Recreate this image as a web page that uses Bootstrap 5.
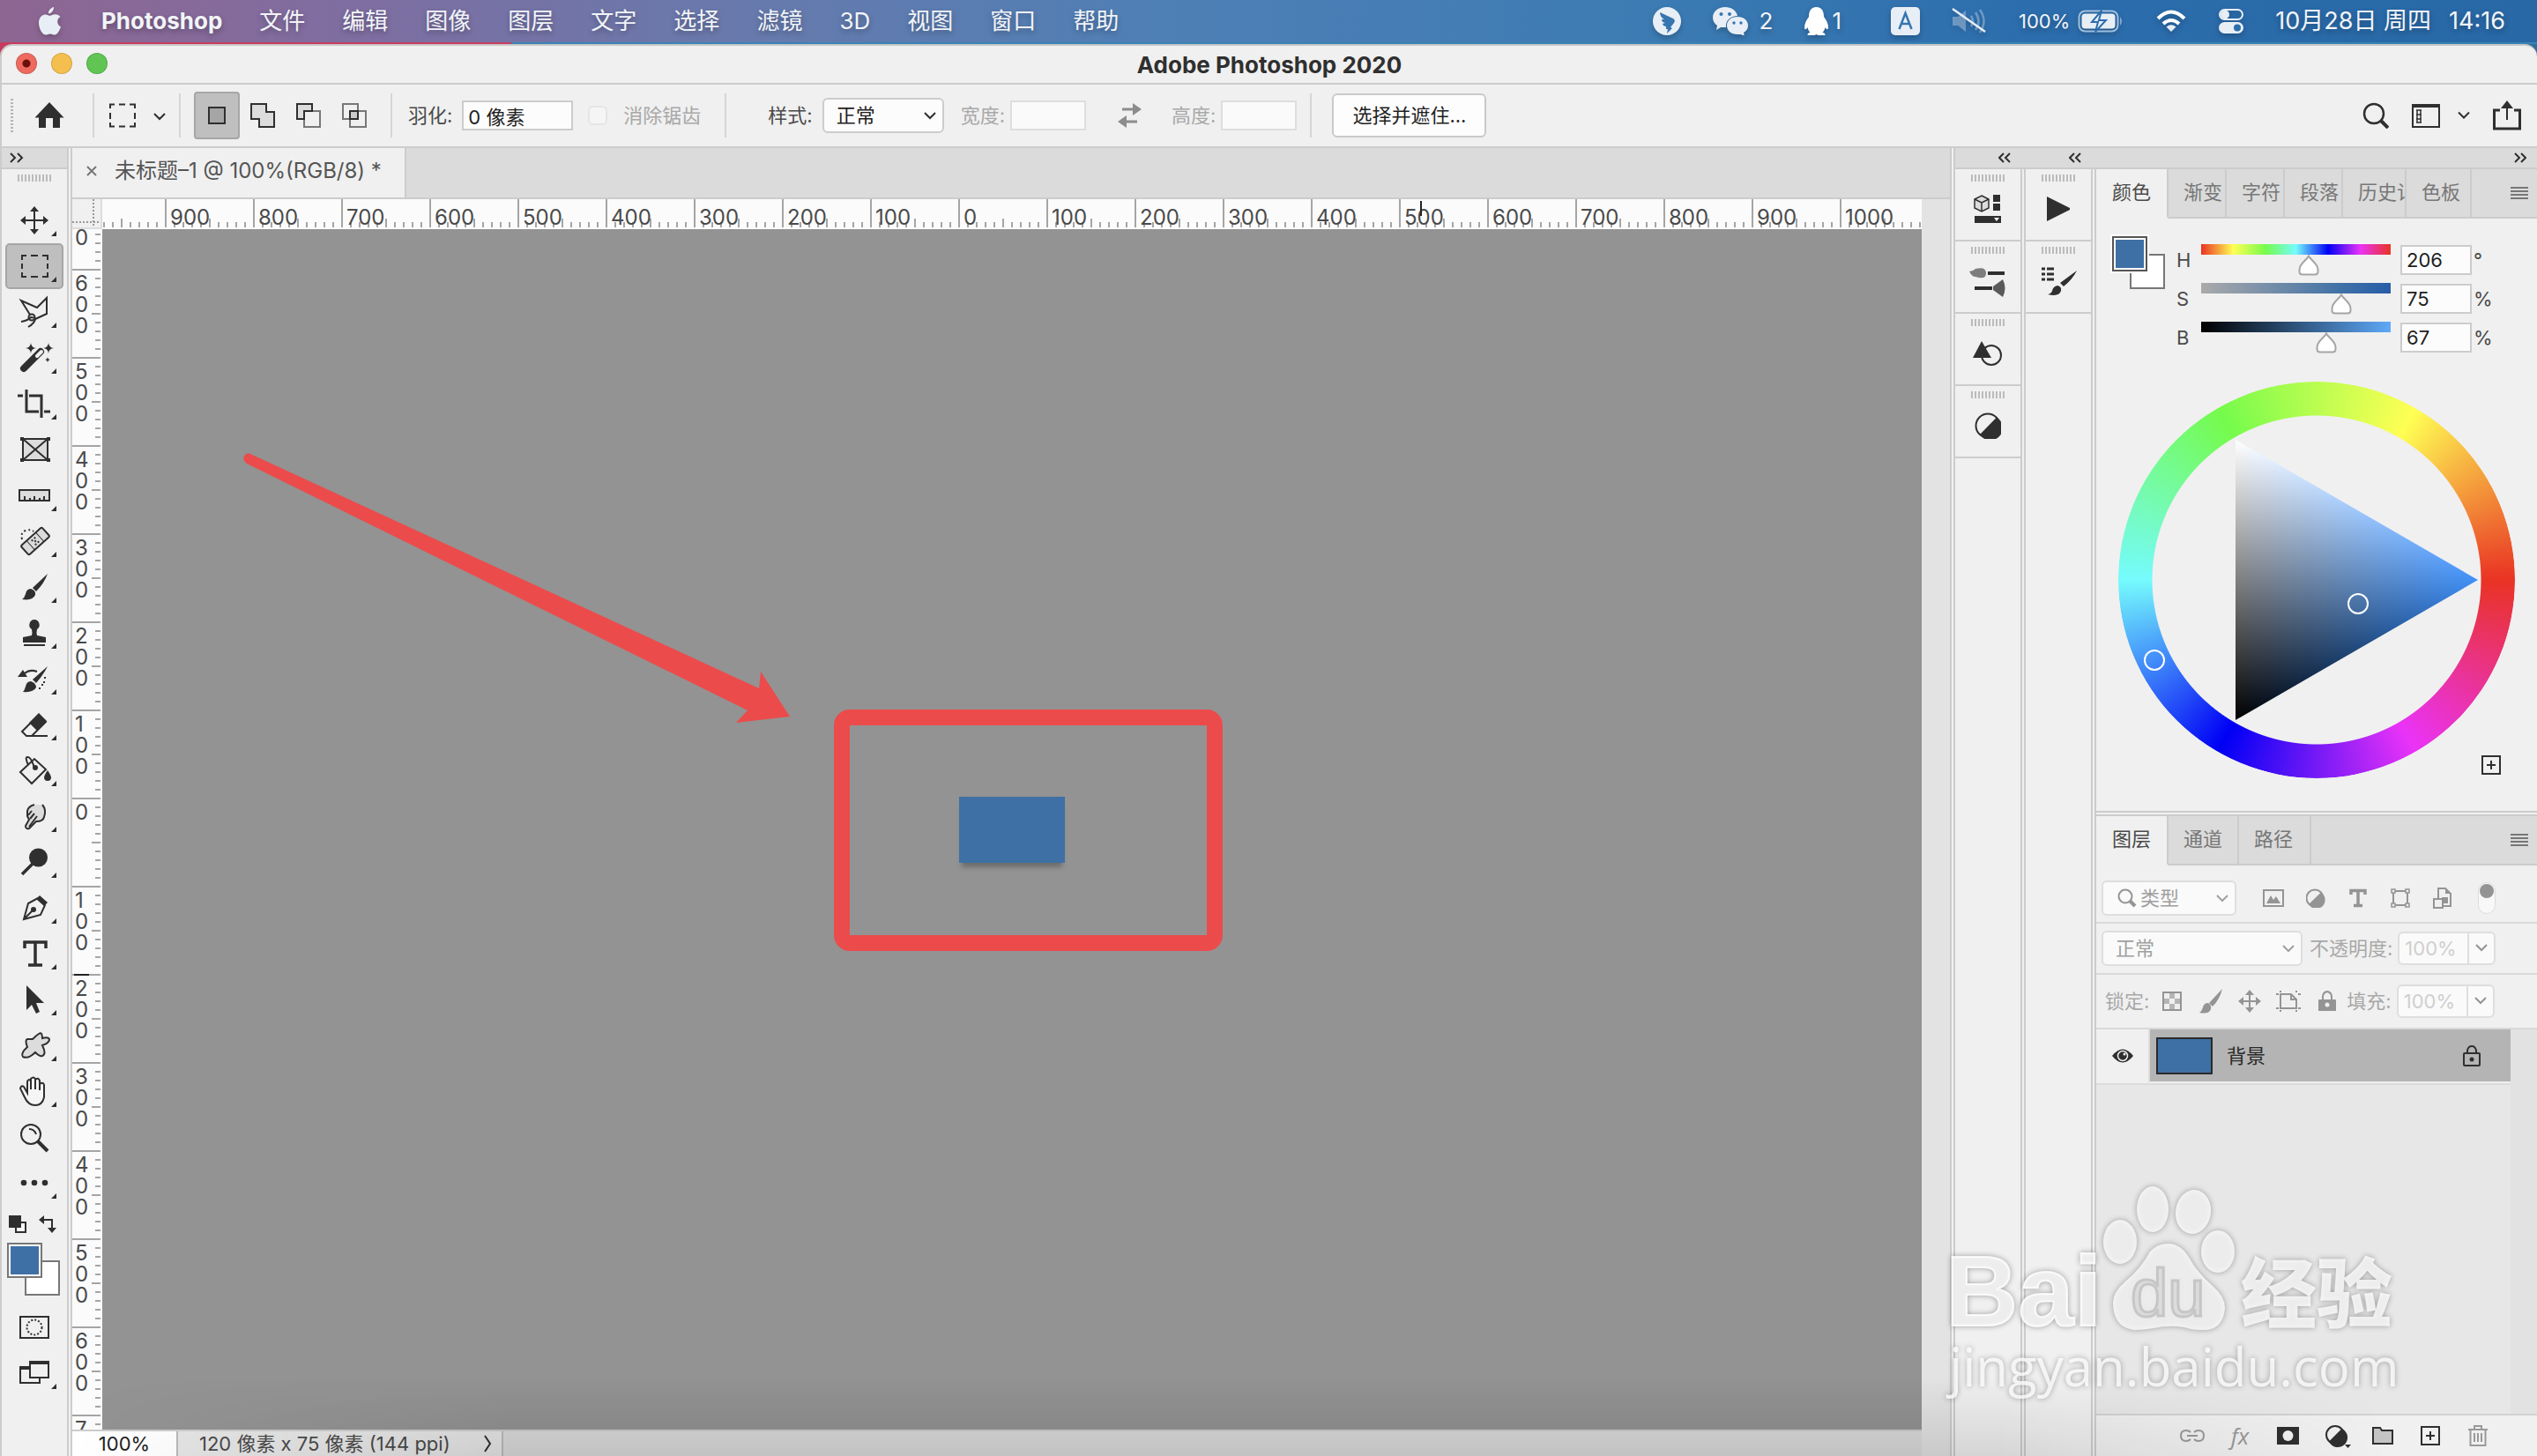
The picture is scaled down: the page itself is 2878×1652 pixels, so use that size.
<!DOCTYPE html>
<html lang="zh-CN">
<head>
<meta charset="utf-8">
<meta name="viewport" content="width=device-width, initial-scale=1">
<title>Adobe Photoshop 2020</title>
<link href="https://cdn.jsdelivr.net/npm/bootstrap@5.3.0/dist/css/bootstrap.min.css" rel="stylesheet">
<style>
  :root { --line:#ccc; --panel:#f0f0f0; --tab:#dbdbdb; --ink:#2f2f2f; --dim:#949494; --blue:#3e70a6; --mark:#ec4b4b; }
  body { font-family: Inter, "Noto Sans CJK SC", sans-serif; font-size: 22px; line-height: 32px; color:#4a4a4a; height:100vh; overflow:hidden;
         background: linear-gradient(90deg,#c73c5e 0 580px,#2f6f9f 580px); }
  svg { display:block; flex:none; fill:none; stroke:var(--ink); stroke-width:2; }
  svg .f { fill:var(--ink); stroke:none; }
  svg .h { fill:#dcdcdc; }
  button { border:0; background:none; padding:0; color:inherit; }
  button, .fixed { flex:none; }

  .menubar { height:50px; padding:0 36px 2px 44px; font-size:26px; color:#f2f4f8; text-shadow:0 3px 6px rgba(0,0,0,.3);
    background: linear-gradient(90deg,#c73c5e 0 580px,#3a83b4 580px) bottom/100% 2px no-repeat,
      linear-gradient(90deg,#8e6692 0,#806da0 13%,#677aad 30%,#4f7fb5 45%,#3d7cb3 64%,#2c6dad 80%,#2868a6 100%); }
  .menubar svg { fill:#e8eef5; stroke:none; filter:drop-shadow(0 3px 3px rgba(0,0,0,.22)); }
  .menus { gap:42px; padding-left:46px; }
  .menus a { color:inherit; text-decoration:none; }
  .tray { gap:36px; }
  .tray .pct { font-size:22px; gap:9px; }
  .tray .clock { font-size:27px; gap:20px; }
  .tray .chat { gap:13px; } .tray .qq { gap:4px; padding-right:20px; }

  .win { border-top:2px solid #c8c8c8; border-left:2px solid var(--line); border-radius:14px 14px 0 0; background:var(--panel); min-height:0; overflow:hidden; }
  .titlebar { height:44px; border-bottom:2px solid var(--line); font-size:26px; font-weight:700; color:var(--ink); padding-top:2px; }
  .lights { left:16px; top:8px; gap:16px; }
  .lights button { width:24px; height:24px; border-radius:50%; border:1px solid rgba(0,0,0,.14); }
  .l-red { background:radial-gradient(circle,#6b0f0a 0 4px,#ee6a5f 5px); } .l-yel { background:#f5bf4f; } .l-grn { background:#61c554; }

  .options { height:72px; border-bottom:2px solid var(--line); padding-left:10px; padding-right:18px; }
  .vsep { width:2px; height:50px; background:#d6d6d6; margin:0 15px; }
  .sgrip { width:3px; height:38px; margin-right:12px; background:repeating-linear-gradient(#b5b5b5 0 2px,transparent 2px 4px); }
  .mode { width:52px; height:54px; border:2px solid transparent; border-radius:4px; }
  .mode.on, .tool.on { background:#bfbfbf; border:2px solid #a6a6a6; }
  .pre { padding-left:3px; } .post { padding-right:12px; }
  .box, .sel { border:2px solid var(--line); background-color:#fcfcfc; border-radius:0; font-size:22px; line-height:26px; color:#1f1f1f; box-shadow:none; min-width:0; }
  .box { height:34px; padding:0 5px; }
  .box:disabled { background:#fafafa; border-color:#dedede; }
  .sel { height:40px; padding:0 34px 0 14px; border-radius:6px; flex:none; background-position:right 6px center; background-size:16px 10px;
    background-image:url("data:image/svg+xml,%3Csvg xmlns='http://www.w3.org/2000/svg' viewBox='0 0 16 10'%3E%3Cpath d='M2 2l6 6 6-6' fill='none' stroke='%232f2f2f' stroke-width='2'/%3E%3C/svg%3E"); }
  .w-feather { width:126px; margin:0 17px 0 11px; } .w-style { width:138px; margin:0 19px 0 11px; } .w-size { width:86px; margin-left:6px; }
  .faint { color:#a8a8a8; }
  .tick { width:22px; height:22px; margin:0 18px 0 0; border:2px solid #dcdcdc; border-radius:5px; background:#fafafa; }
  .push { width:175px; height:50px; border:2px solid #c9c9c9; border-radius:6px; background:#fdfdfd; color:#1f1f1f; }
  .apptools { gap:26px; } .apptools .ws { gap:20px; }

  .tools { width:80px; border-right:6px double var(--line); }
  .strip-head { height:24px; border-bottom:2px solid var(--line); background:var(--tab); padding-left:9px; }
  .grip { width:38px; height:8px; margin:6px auto 0; background:repeating-linear-gradient(90deg,#bbb 0 2px,transparent 2px 4px); }
  .toolset { padding:18px 4px 0; }
  .tool { width:66px; height:52px; border:2px solid transparent; border-radius:5px; }
  .tool svg { margin:-2px; }
  .minis { height:42px; }
  .swatches { height:62px; margin:0 6px 8px; }
  .chip { width:40px; height:40px; border:2px solid #777; position:absolute; }
  .chip-bg { background:#fff; right:2px; bottom:2px; } .chip-fg { left:0; top:0; background:var(--blue); box-shadow:inset 0 0 0 2px #fff; }

  .doc, .body-row { min-width:0; min-height:0; }
  .tabbar { height:58px; border-bottom:2px solid var(--line); background:var(--tab); }
  .doctab { background:var(--panel); border-right:2px solid var(--line); padding:0 26px 4px 15px; gap:19px; font-size:24px; color:#555; }
  .rule-row { height:34px; }
  .corner { width:34px; height:34px; border-right:2px solid #ddd; border-bottom:2px solid #ddd; stroke:#999; stroke-dasharray:2 2; }
  .hrule, .vrule { background-color:#fbfbfb; background-repeat:repeat-x; font-size:24px; line-height:24px; color:#4a4a4a; overflow:hidden; min-width:0; }
  .hrule { padding-left:72px; height:34px;
    background-image:linear-gradient(90deg,#a5a5a5 2px,transparent 2px),linear-gradient(90deg,#a5a5a5 2px,transparent 2px),linear-gradient(90deg,#a5a5a5 2px,transparent 2px);
    background-size:100px 32px,100px 10px,10px 6px; background-position:71px 0,121px 22px,1px 26px; }
  .hrule span { width:100px; flex:none; padding:9px 0 0 5px; }
  .cursor-x { left:1495px; top:2px; width:2px; height:17px; background:#222; }
  .vrule { width:34px; background-repeat:repeat-y;
    background-image:linear-gradient(#a5a5a5 2px,transparent 2px),linear-gradient(#a5a5a5 2px,transparent 2px),linear-gradient(#a5a5a5 2px,transparent 2px);
    background-size:32px 100px,10px 100px,6px 10px; background-position:0 45px,22px 95px,26px 5px; }
  .vrule span { display:block; height:100px; width:20px; padding:4px 3px 0; word-break:break-all; flex:none; }
  .vrule span.part { height:46px; padding-top:0; line-height:20px; }
  .cursor-y { left:2px; top:845px; width:17px; height:2px; background:#222; }
  .canvas { background:#939393; min-width:0; overflow:hidden; }
  .art { left:972px; top:644px; width:120px; height:75px; background:var(--blue); box-shadow:0 8px 5px -3px rgba(0,0,0,.25); }
  .callout-box { left:830px; top:545px; width:441px; height:274px; border:18px solid var(--mark); border-radius:18px; }
  .arrow { left:156px; top:250px; fill:var(--mark); stroke:none; }
  .scroller { width:32px; background:#e3e3e3; }
  .status { height:30px; border-top:2px solid var(--line); background:var(--tab); line-height:28px; }
  .zoomv { width:118px; background:#fff; color:#222; text-align:center; border:0; padding:0; height:28px; font-size:22px; }
  .info { border-left:2px solid #bbb; border-right:2px solid #bbb; background:#e6e6e6; padding:0 10px 0 24px; gap:38px; }

  .dock { width:666px; border-left:6px double var(--line); }
  .dock-head { height:24px; border-bottom:2px solid var(--line); background:var(--tab); padding-right:12px; }
  .dock-head .c { width:80px; padding-right:17px; }
  .icol { width:80px; border-right:6px double var(--line); }
  .icell { height:82px; border-bottom:2px solid var(--line); padding-bottom:4px; }
  .icell svg { margin:auto; }
  .ptabs { height:56px; background:var(--tab); }
  .ptabs button { border-right:2px solid var(--line); border-bottom:2px solid var(--line); padding:0 2px 2px 17px; text-align:left; overflow:hidden; white-space:nowrap; color:#777; }
  .ptabs button.on { background:var(--panel); border-bottom-color:var(--panel); color:#4a4a4a; padding-left:18px; }
  .ptabs svg, .swap { stroke:#777; }
  .w66 { width:66px; } .w72 { width:72px; } .w74 { width:74px; } .w82 { width:82px; } .w80 { width:80px; }
  .ptabs .rest { border-bottom:2px solid var(--line); padding-right:10px; }
  .colorpanel { height:728px; }
  .pick { padding:18px 0 0 16px; }
  .pchips { width:62px; height:62px; }
  .pchips .chip-bg { right:0; bottom:0; } .pchips .chip-fg { left:2px; top:2px; border-color:#555; box-shadow:inset 0 0 0 2px #fff,0 0 0 2px #fff; }
  .hsb { padding:7px 0 0 13px; }
  .hsb > div { height:44px; }
  .hsb label { width:28px; }
  .hsb .box { width:81px; margin:0 2px 0 11px; }
  .slide { appearance:none; -webkit-appearance:none; width:239px; height:36px; margin:0 -12px; background:var(--ramp) top center/215px 12px no-repeat; }
  .slide::-webkit-slider-thumb { -webkit-appearance:none; width:24px; height:24px; margin-top:12px;
    background:url("data:image/svg+xml,%3Csvg xmlns='http://www.w3.org/2000/svg' viewBox='0 0 24 24'%3E%3Cpath d='M12 1.5C9 7 1.500 10 1.500 17v2q0 3.500 3.500 3.500h14q3.500 0 3.500-3.500v-2C22.500 10 15 7 12 1.500z' fill='%23fff' stroke='%23a5a5a5' stroke-width='2'/%3E%3C/svg%3E") center/24px; }
  .r-h { --ramp:linear-gradient(90deg,#e93323,#ffff54 17%,#75fb4c 34%,#75fbfd 50%,#0000f5 67%,#ea33f7 84%,#e93323); }
  .r-s { --ramp:linear-gradient(90deg,#aaa,#3e70a6 75%,#285ca8); }
  .r-b { --ramp:linear-gradient(90deg,#000,#3e70a6 67%,#5ea9f8); }
  .wheelwrap { margin-top:28px; }
  .wheel { width:450px; height:450px; margin:0 auto; }
  .ring { inset:0; border-radius:50%; background:conic-gradient(from 90deg,#e93323,#ea33f7,#0000f5,#75fbfd,#75fb4c,#ffff54,#e93323);
    -webkit-mask:radial-gradient(circle,transparent 186px,#000 187px); mask:radial-gradient(circle,transparent 186px,#000 187px); }
  .wheel svg { position:relative; stroke:none; }
  .tri { isolation:isolate; } .hue { mix-blend-mode:plus-lighter; }
  .addcolor { right:41px; bottom:4px; }
  .layers { border-top:6px double var(--line); min-height:0; }
  .lrow { border-bottom:2px solid #d9d9d9; padding-left:6px; }
  .lrow1 { height:66px; padding-top:10px; } .lrow2 { height:58px; } .lrow3 { height:62px; padding-left:10px; }
  .layers .sel { color:#a0a0a0; border-color:#dedede; background-color:#fafafa;
    background-image:url("data:image/svg+xml,%3Csvg xmlns='http://www.w3.org/2000/svg' viewBox='0 0 16 10'%3E%3Cpath d='M2 2l6 6 6-6' fill='none' stroke='%23a0a0a0' stroke-width='2'/%3E%3C/svg%3E"); opacity:1; }
  .layers .kind { width:153px; padding-left:42px; } .blend { width:228px; margin-right:8px; }
  .kindicon { left:18px; top:9px; }
  .dims svg { stroke:var(--dim); } .dims svg .f { fill:var(--dim); }
  .filters { margin-left:18px; } .filters button { width:48px; } .locks { margin-left:4px; } .locks button { width:44px; }
  .filters svg, .locks svg { margin:auto; }
  .switch { width:20px; height:36px; border-radius:10px; background:#f8f8f8; border:1px solid #ddd; margin:auto; }
  .switch::before { content:""; display:block; width:16px; height:16px; margin:1px; border-radius:50%; background:var(--dim); }
  .combo { margin-left:6px; border:2px solid #dedede; border-radius:6px; background:#fafafa; height:38px; width:111px; }
  .combo input { width:79px; border:0; border-right:2px solid #dedede; background:none; padding:0 0 0 6px; color:#cfcfcf; height:34px; }
  .combo button { width:28px; } .combo svg { margin:auto; }
  .eye { width:61px; height:60px; border-right:2px solid #ddd; }
  .layeritem { height:60px; background:#b4b4b4; padding:0 34px 0 7px; color:#2a2a2a; border-bottom:1px solid #eee; }
  .lthumb { width:64px; height:42px; background:var(--blue); border:2px solid #2a2a2a; margin-right:16px; }
  .list { background:#e7e7e7; } .rail { width:30px; background:#e2e2e2; }
  .lrowline { border-bottom:2px solid #dcdcdc; background:var(--panel); height:63px; }
  .lfoot { height:48px; border-top:2px solid #d2d2d2; padding-right:40px; }
  .lfoot button { width:54px; height:46px; } .lfoot svg { margin:auto; }
  .lfoot .soft { stroke:#999; }
  .fx { font-style:italic; font-size:26px; color:#999; font-family:"Open Sans",sans-serif; }
  .dusk { left:82px; right:0; bottom:0; height:90px; pointer-events:none; background:linear-gradient(to top,rgba(0,0,0,.11),transparent);
    -webkit-mask:linear-gradient(90deg,transparent 0,#000 18%,#000 78%,transparent 94%); mask:linear-gradient(90deg,transparent 0,#000 18%,#000 78%,transparent 94%); }
  .wm { right:138px; bottom:37px; pointer-events:none; stroke:none; fill:rgba(255,255,255,.8); filter:drop-shadow(0 0 3px rgba(0,0,0,.4)); }
  .wm .big { font:700 114px "Liberation Sans",sans-serif; stroke:rgba(255,255,255,.8); stroke-width:2px; }
  .wm .du { font:400 76px "Liberation Sans",sans-serif; fill:#dcdcdc; stroke:#c6c6c6; stroke-width:3px; }
  .wm .cn { font:900 86px "Noto Sans CJK SC",sans-serif; }
  .wm .url { font:400 60px "Open Sans",sans-serif; }
</style>
</head>
<body class="d-flex flex-column position-relative">

<header class="menubar d-flex align-items-center justify-content-between fixed">
  <nav class="d-flex align-items-center">
    <svg width="25" height="32" viewBox="0 0 25 32"><path d="M17 0c.4 3.500-3 7.500-6 7.300C10.600 4 14 .5 17 0zM24.400 11c-2 1.300-3.200 3-3.200 5.600 0 3 1.700 5 3.800 6-1.300 3.900-4 9-7.100 9-1.900 0-2.800-1.200-5-1.200s-3.300 1.200-5 1.200C4.200 31.600 0 24.500 0 18c0-6 3.600-9.600 7.400-9.600 2.200 0 4 1.400 5.300 1.400 1.200 0 3.200-1.600 6-1.600 2 0 4.300.9 5.700 2.800z"/></svg>
    <div class="menus d-flex">
      <a href="#" class="fw-bold">Photoshop</a><a href="#">文件</a><a href="#">编辑</a><a href="#">图像</a><a href="#">图层</a><a href="#">文字</a><a href="#">选择</a><a href="#">滤镜</a><a href="#">3D</a><a href="#">视图</a><a href="#">窗口</a><a href="#">帮助</a>
    </div>
  </nav>
  <div class="tray d-flex align-items-center">
    <svg width="32" height="32"><circle cx="16" cy="16" r="16"/><path d="M8 6l15 7q3 2 1 5l-4 5 2 1-6 6 1-5h-2l0-3q-3 0-4-3l3-1q-4-1-4-4h3Q8 11 8 6z" fill="#3575b0"/></svg>
    <div class="chat d-flex align-items-center">
      <svg width="40" height="32"><path d="M14 0C6 0 0 5 0 12c0 4 2 7 5 9l-1 5 5-3h6c-1-8 6-13 13-13C27 4 21 0 14 0z"/><circle cx="9.500" cy="8" r="2" fill="#3575b0"/><circle cx="19" cy="8" r="2" fill="#3575b0"/><path d="M28 11c-7 0-12 4-12 10s5 10 12 10h4l4 2-1-4c3-2 5-4 5-8 0-6-5-10-12-10z"/><circle cx="24" cy="18" r="1.700" fill="#3575b0"/><circle cx="32" cy="18" r="1.700" fill="#3575b0"/></svg>
      <span>2</span>
    </div>
    <div class="qq d-flex align-items-center">
      <svg width="27" height="32"><path d="M13.500 0C7 0 5 5 5 11c-3 4-5 8-5 12 0 3 2 3 3.500 0 .5 3 2 5 3 6-2 0-3 1-3 3h8l2-1 2 1h8c0-2-1-3-3-3 1-1 2.500-3 3-6 1.500 3 3.500 3 3.500 0 0-4-2-8-5-12C22 5 20 0 13.500 0z" fill="#fff"/></svg>
      <span>1</span>
    </div>
    <svg width="33" height="32"><rect width="33" height="32" rx="5"/><path d="M9.500 25L16.500 7l7 18M12 19h9" fill="none" stroke="#3575b0" stroke-width="2.500"/></svg>
    <svg width="40" height="32"><g opacity=".35"><path d="M1 11h6l9-7v24l-9-7H1z"/><path d="M22 10q4 6 0 12M27 6q7 10 0 20M32 3q9 13 0 26" fill="none" stroke="#e8eef5" stroke-width="2.500"/></g><path d="M1 2l37 26" stroke="#e8eef5" stroke-width="2.500"/></svg>
    <div class="pct d-flex align-items-center"><span>100%</span>
      <svg width="52" height="26"><rect x="1.500" y="1.500" width="44" height="23" rx="7" fill="none" stroke="#9fbfdd" stroke-width="2"/><path d="M48 8q4 5 0 10z" opacity=".5"/><rect x="4.500" y="4.500" width="38" height="17" rx="4"/><path d="M27 1L16 14h7l-3 11 12-13h-8z" stroke="#2c6dad" stroke-width="2"/></svg></div>
    <svg width="36" height="26" viewBox="0 0 36 26"><path d="M3 10Q18-5 33 10M9 16q9-8 18 0" fill="none" stroke="#fff" stroke-width="4"/><path d="M12.500 19.500Q18 15 23.500 19.500L18 25z"/></svg>
    <svg width="28" height="28"><rect x="1" y="1" width="26" height="11" rx="5.500" fill="none" stroke="#e8eef5" stroke-width="2"/><circle cx="7" cy="6.500" r="5"/><rect y="15" width="28" height="13" rx="6.500"/><circle cx="21" cy="21.500" r="4" fill="#2c6dad"/></svg>
    <div class="clock d-flex"><span>10月28日 周四</span><span>14:16</span></div>
  </div>
</header>

<main class="win d-flex flex-column flex-grow-1">
  <div class="titlebar d-flex align-items-center justify-content-center position-relative fixed">
    <div class="lights d-flex position-absolute"><button class="l-red" aria-label="关闭"></button><button class="l-yel" aria-label="最小化"></button><button class="l-grn" aria-label="缩放"></button></div>
    Adobe Photoshop 2020
  </div>

  <div class="options d-flex align-items-center fixed">
    <div class="sgrip"></div>
    <button aria-label="主页"><svg width="63" height="40"><path class="f" d="M29 5L12.500 22.500h4.500V34h8V23h8v11h8V22.500h4.500z"/></svg></button>
    <div class="vsep"></div>
    <button aria-label="矩形选框"><svg width="66" height="40"><path d="M3 12V7.500h5M13 7.500h7M25 7.500h6V12M31 17v7M31 28v4.500h-6M20 32.500h-7M8 32.500H3V28M3 24v-7M53 18l6 6 6-6"/></svg></button>
    <div class="vsep"></div>
    <div class="d-flex">
      <button class="mode on" aria-label="新选区"><svg width="48" height="50"><rect x="15" y="16" width="18" height="18" fill="#a5a5a5"/></svg></button>
      <button class="mode" aria-label="添加到选区"><svg width="48" height="50"><path class="h" d="M11 12h17v9h9v17H20v-9h-9z"/></svg></button>
      <button class="mode" aria-label="从选区减去"><svg width="48" height="50"><rect class="h" x="11" y="12" width="17" height="17"/><rect x="19" y="20" width="18" height="18" fill="#f0f0f0" stroke="#777"/><path d="M28 20v-8H11v17h8V20z"/></svg></button>
      <button class="mode" aria-label="与选区交叉"><svg width="48" height="50"><g stroke="#777"><rect x="11" y="12" width="17" height="17"/><rect x="19" y="20" width="18" height="18"/></g><rect x="19" y="20" width="9" height="9" fill="#ccc"/></svg></button>
    </div>
    <div class="vsep"></div>
    <div class="pre post d-flex align-items-center">
      <label for="feather">羽化:</label><input id="feather" class="box w-feather" value="0 像素">
      <input id="aa" type="checkbox" class="tick form-check-input" disabled><label for="aa" class="faint">消除锯齿</label>
    </div>
    <div class="vsep"></div>
    <div class="d-flex align-items-center ps-4 ms-2">
      <label for="style">样式:</label><select id="style" class="sel form-select w-style"><option>正常</option></select>
      <label for="ww" class="faint">宽度:</label><input id="ww" class="box w-size" disabled>
      <button aria-label="互换宽高" class="px-2 mx-4"><svg width="29" height="28" class="ms-1"><path d="M5 7h13M22 21H9" stroke="#8c8c8c" stroke-width="3"/><path d="M17 0l10 7-10 7zM10 14L0 21l10 7z" fill="#8c8c8c" stroke="none"/></svg></button>
      <label for="hh" class="faint">高度:</label><input id="hh" class="box w-size" disabled>
    </div>
    <div class="vsep"></div>
    <button class="push ms-2">选择并遮住...</button>
    <div class="apptools d-flex align-items-center ms-auto">
      <button aria-label="搜索"><svg width="30" height="30"><circle cx="13" cy="13" r="11" stroke-width="2.500"/><path d="M21 21l8 8" stroke-width="4"/></svg></button>
      <button class="ws d-flex align-items-center" aria-label="工作区"><svg width="32" height="28"><rect x="1" y="2" width="30" height="25"/><path class="f" d="M0 1h32v4H0z"/><path d="M6 8v14M10 8v14M5 8h6M5 13h6M5 18h6M5 22h6" stroke-width="1.500"/></svg><svg width="14" height="10"><path d="M1 1.500l6 6 6-6"/></svg></button>
      <button aria-label="共享"><svg width="32" height="34"><path d="M8 11H1.500v21h29V11H24" stroke-width="3"/><path d="M16 22V5"/><path class="f" d="M16 0l7 9H9z"/></svg></button>
    </div>
  </div>

  <div class="body-row d-flex flex-grow-1">
    <aside class="tools fixed">
      <div class="strip-head d-flex align-items-center"><svg width="16" height="12"><path d="M1 1l5 5-5 5M9 1l5 5-5 5"/></svg></div>
      <div class="grip"></div>
      <div class="toolset d-flex flex-column">
        <button class="tool" aria-label="移动"><svg width="66" height="52"><path d="M33 14v24M21 26h24"/><path class="f" d="M33 10l5 6H28zM33 42l5-6H28zM17 26l6-5v10zM49 26l-6-5v10zM58 38v6h-6z"/></svg></button>
        <button class="tool on" aria-label="矩形选框"><svg width="66" height="52"><path d="M19 19v-5h5M29 14h8M42 14h6v5M48 23v6M48 33v5h-6M37 38h-8M24 38h-5v-5M19 29v-6"/><path class="f" d="M58 38v6h-6z"/></svg></button>
        <button class="tool" aria-label="多边形套索"><svg width="66" height="52"><path d="M28 29L18 13l18 8 11-11v18L34 34M18 37q7-1 11-5 4 0 5 2-1 5-8 9"/><circle cx="30" cy="32" r="3.500"/><path class="f" d="M58 38v6h-6z"/></svg></button>
        <button class="tool" aria-label="魔棒"><svg width="66" height="52"><path d="M21 38L40 19" stroke-width="8" stroke-linecap="round"/><path d="M36 24l5-5" stroke="#f0f0f0" stroke-width="4" stroke-linecap="round"/><path class="f" d="M29 9q.5 5.500 6 6-5.500.5-6 6-.5-5.500-6-6 5.500-.5 6-6zM49 9q.5 5.500 6 6-5.500.5-6 6-.5-5.500-6-6 5.500-.5 6-6zM48 25q.4 3 3 3-2.600.4-3 3-.4-2.600-3-3 2.600 0 3-3zM58 38v6h-6z"/></svg></button>
        <button class="tool" aria-label="裁剪"><svg width="66" height="52"><path d="M24 10v25h14M44 35h7M14 17h6M27 17h14v25" stroke-width="3"/><path class="f" d="M58 38v6h-6z"/></svg></button>
        <button class="tool" aria-label="图框"><svg width="66" height="52"><rect class="h" x="20" y="14" width="28" height="24"/><path d="M20 14l28 24M48 14L20 38"/><path class="f" d="M17 12h4v4h-4zM47 12h4v4h-4zM17 36h4v4h-4zM47 36h4v4h-4z"/></svg></button>
        <button class="tool" aria-label="标尺"><svg width="66" height="52"><rect class="h" x="16" y="20" width="34" height="12"/><path d="M22 27v5M28 29v3M33 27v5M39 29v3M44 27v5"/><path class="f" d="M58 38v6h-6z"/></svg></button>
        <button class="tool" aria-label="污点修复"><svg width="66" height="52"><path d="M19 24q-2-8 4-10 6-2 9 1" stroke-dasharray="2 3"/><g transform="rotate(-42 34 26)"><rect class="h" x="18" y="19" width="32" height="14" rx="2"/><path d="M27 19v14M41 19v14" stroke-width="1"/><path d="M31 23h2M35 23h2M33 26h2M31 29h2M35 29h2"/></g><path class="f" d="M58 38v6h-6z"/></svg></button>
        <button class="tool" aria-label="画笔"><svg width="66" height="52"><path class="f" d="M48 11L31 27l4 4Q44 22 48 11zM29 28q-5 0-6 6-1 4-4 6 12 2 15-5 1-5-5-7zM58 38v6h-6z"/></svg></button>
        <button class="tool" aria-label="仿制图章"><svg width="66" height="52"><path class="f" d="M33 11a6 6 0 0 1 3 11q-1 4 0 7l10 2v6H20v-6l10-2q1-3 0-7a6 6 0 0 1 3-11zM21 39h24v2H21zM58 38v6h-6z"/></svg></button>
        <button class="tool" aria-label="历史记录画笔"><svg width="66" height="52"><path class="f" d="M48 12L31 27l4 4Q43 22 48 12zM29 29q-5 0-6 6-1 4-3 6 12 1 15-5 0-5-6-7zM14 24l6-8 5 8zM58 38v6h-6z"/><path d="M22 20q6-5 14-2M45 24v2M44 29v2M41 33h2M38 37h2"/></svg></button>
        <button class="tool" aria-label="橡皮擦"><svg width="66" height="52"><path d="M19 34l19-19 8 8-16 16h-6z"/><path class="f" d="M38 13l9 9-11 11-9-9zM58 38v6h-6z"/><path d="M24 39h24"/></svg></button>
        <button class="tool" aria-label="油漆桶"><svg width="66" height="52"><path d="M17 28l16-15 13 12-16 16zM26 20q-4-9-1-9 4-1 8 12"/><circle class="f" cx="34" cy="23" r="3"/><path class="f" d="M48 26q-4 6-4 8a4 4 0 0 0 8 0q0-2-4-8zM58 38v6h-6z"/></svg></button>
        <button class="tool" aria-label="涂抹"><svg width="66" height="52"><path class="h" d="M33 13q-7 2-8 7v6l2 4-4 7q0 4 4 3l8-8q8 0 9-5 3-8-2-14"/><path d="M26 25l4-5M28 29l5-6M36 26l-9 12"/><path class="f" d="M58 38v6h-6z"/></svg></button>
        <button class="tool" aria-label="减淡"><svg width="66" height="52"><circle class="f" cx="37.500" cy="21" r="10.500"/><path d="M19 40l12-12" stroke-width="3.500"/><path class="f" d="M58 38v6h-6z"/></svg></button>
        <button class="tool" aria-label="钢笔"><svg width="66" height="52"><path d="M21 39l5-18 11-6 8 8-5 11zM21 39l11-11"/><circle class="f" cx="32" cy="28" r="3"/><path class="f" d="M39 12l9 8-4 4-9-8zM58 38v6h-6z"/></svg></button>
        <button class="tool" aria-label="横排文字"><svg width="66" height="52"><path d="M22 20v-7h24v7M34 13v26M26 39h16" stroke-width="3.500"/><path class="f" d="M58 38v6h-6z"/></svg></button>
        <button class="tool" aria-label="路径选择"><svg width="66" height="52"><path class="f" d="M24 10v28l6-6 5 10 4-2-4-10h9zM58 38v6h-6z"/></svg></button>
        <button class="tool" aria-label="自定形状"><svg width="66" height="52"><path class="h" d="M38 13q4-3 4 5 8-2 8 2-1 4-8 6 5 10 0 12-3 1-8-4-8 8-14 5-3-4 5-11-3-8 0-9 4 0 6 0 4-4 7-6z"/><path class="f" d="M58 38v6h-6z"/></svg></button>
        <button class="tool" aria-label="抓手"><svg width="66" height="52"><path d="M25 28V15q2-4 4 0v9V12q3-3 5 0v12V13q3-3 5 1v11-7q4-3 5 1v14q-2 9-10 9-8 0-12-9l-5-10q1-4 4-2z" fill="#f5f5f5"/><path class="f" d="M58 38v6h-6z"/></svg></button>
        <button class="tool" aria-label="缩放"><svg width="66" height="52"><circle cx="29" cy="23" r="11"/><path d="M27 17q6 0 8 6"/><path d="M37 31l11 11" stroke-width="4"/></svg></button>
        <button class="tool" aria-label="编辑工具栏"><svg width="66" height="52"><circle class="f" cx="21" cy="26" r="3.300"/><circle class="f" cx="33" cy="26" r="3.300"/><circle class="f" cx="45" cy="26" r="3.300"/><path class="f" d="M58 38v6h-6z"/></svg></button>
        <div class="minis d-flex justify-content-between align-items-center px-1"><button aria-label="默认颜色"><svg width="22" height="20"><rect x="8" y="8" width="11" height="11" fill="#fff"/><path class="f" d="M0 0h14v14H0z"/></svg></button><button aria-label="切换颜色"><svg width="24" height="20"><path d="M5 5h10v10"/><path class="f" d="M0 5l6-5v10zM15 20l-5-6h10z"/></svg></button></div>
      </div>
      <div class="swatches position-relative"><button class="chip chip-bg" aria-label="背景色"></button><button class="chip chip-fg" aria-label="前景色"></button></div>
      <div class="d-flex flex-column px-1">
        <button class="tool" aria-label="快速蒙版"><svg width="66" height="52"><rect x="17" y="14" width="32" height="24"/><circle cx="33" cy="26" r="8.500" stroke-dasharray="2 2"/></svg></button>
        <button class="tool" aria-label="屏幕模式"><svg width="66" height="52"><path d="M27 19H17v18h22v-6M28 13h21v18H28z"/><path class="f" d="M27 12h23v4H27zM16 18h11v4H16zM58 38v6h-6z"/></svg></button>
      </div>
    </aside>

    <section class="doc d-flex flex-column flex-grow-1">
      <div class="tabbar d-flex fixed">
        <div class="doctab d-flex align-items-center"><button aria-label="关闭文档"><svg width="14" height="14" class="swap"><path d="M2 2l10 10M12 2L2 12"/></svg></button><span>未标题–1 @ 100%(RGB/8) *</span></div>
      </div>
      <div class="body-row d-flex flex-grow-1">
        <div class="body-row d-flex flex-column flex-grow-1">
          <div class="rule-row d-flex fixed">
            <svg class="corner" width="34" height="34"><path d="M24 0v32M0 26h32"/></svg>
            <div class="hrule d-flex flex-grow-1 position-relative">
              <span>900</span><span>800</span><span>700</span><span>600</span><span>500</span><span>400</span><span>300</span><span>200</span><span>100</span><span>0</span><span>100</span><span>200</span><span>300</span><span>400</span><span>500</span><span>600</span><span>700</span><span>800</span><span>900</span><span>1000</span>
              <i class="cursor-x position-absolute"></i>
            </div>
          </div>
          <div class="body-row d-flex flex-grow-1">
            <div class="vrule position-relative fixed">
              <span class="part">0</span><span>600</span><span>500</span><span>400</span><span>300</span><span>200</span><span>100</span><span>0</span><span>100</span><span>200</span><span>300</span><span>400</span><span>500</span><span>600</span><span>7</span>
              <i class="cursor-y position-absolute"></i>
            </div>
            <div class="canvas position-relative flex-grow-1">
              <div class="art position-absolute"></div>
              <div class="callout-box position-absolute"></div>
              <svg class="arrow position-absolute" width="640" height="320"><path d="M12 5L589 271 591 252 624 303 563 310 576 296 10 17Q1 12 6 6 9 3 12 5z"/></svg>
            </div>
          </div>
          <div class="status d-flex fixed">
            <input class="zoomv" value="100%" aria-label="缩放比例">
            <div class="info d-flex align-items-center"><span>120 像素 x 75 像素 (144 ppi)</span><svg width="10" height="20"><path d="M1 1l6 9-6 9"/></svg></div>
          </div>
        </div>
        <div class="scroller fixed"></div>
      </div>
    </section>

    <aside class="dock d-flex flex-column fixed">
      <div class="dock-head d-flex align-items-center fixed">
        <div class="c d-flex justify-content-end"><svg width="14" height="12"><path d="M6 1L1 6l5 5M13 1L8 6l5 5"/></svg></div>
        <div class="c d-flex justify-content-end"><svg width="14" height="12"><path d="M6 1L1 6l5 5M13 1L8 6l5 5"/></svg></div>
        <svg width="14" height="12" class="ms-auto"><path d="M1 1l5 5-5 5M8 1l5 5-5 5"/></svg>
      </div>
      <div class="body-row d-flex flex-grow-1">
        <div class="icol fixed">
          <div class="icell d-flex flex-column"><div class="grip"></div><svg width="32" height="34"><path class="f" d="M22 1h8v8h-8zM22 11h8v8h-8zM1 25h30v8H1z"/><path class="h" d="M9 2l8 4v10l-8 4-8-4V6z" stroke-width="1.500"/><path d="M1 6l8 4 8-4M9 10v10" stroke-width="1.500"/><path d="M23 27h6l-3 4z" fill="#fff" stroke="none"/></svg></div>
          <div class="icell d-flex flex-column"><div class="grip"></div><svg width="42" height="36"><path d="M21 9h19M6 26h20" stroke-width="4"/><path d="M0 7q4 0 7-3 12-3 12 5t-12 4Q3 13 0 7z" fill="#7d7d7d" stroke="none"/><path d="M27 24l11-8q5 10 0 20l-11-8z" fill="#5a5a5a" stroke="none"/></svg></div>
          <div class="icell d-flex flex-column"><div class="grip"></div><svg width="34" height="32"><circle cx="21" cy="18" r="11"/><path class="f" d="M10 2l11 19H0z"/></svg></div>
          <div class="icell d-flex flex-column"><div class="grip"></div><svg width="30" height="30"><circle cx="15" cy="15" r="13.500"/><path class="f" d="M25 5.500A14 14 0 1 1 6 25z"/></svg></div>
        </div>
        <div class="icol fixed">
          <div class="icell d-flex flex-column"><div class="grip"></div><svg width="26" height="30"><path class="f" d="M0 1l28 14L0 29z"/></svg></div>
          <div class="icell d-flex flex-column"><div class="grip"></div><svg width="42" height="36"><path d="M2 4h4M8 4h8M2 10h4M8 10h8M2 16h4M8 16h8" stroke-width="3"/><path class="f" d="M42 6L23 20l4 4Q37 16 42 6zM20 23q-5 1-6 6-1 3-5 4 13 3 15-4 1-5-4-6z"/></svg></div>
        </div>
        <div class="d-flex flex-column flex-grow-1">
          <section class="colorpanel d-flex flex-column fixed">
            <div class="ptabs d-flex fixed"><button class="on w82">颜色</button><button class="w66">渐变</button><button class="w66">字符</button><button class="w66">段落</button><button class="w72">历史记录</button><button class="w74">色板</button><div class="rest flex-grow-1 d-flex align-items-center justify-content-end"><svg width="20" height="16"><path d="M0 2h20M0 6h20M0 10h20M0 14h20"/></svg></div></div>
            <div class="pick d-flex">
              <div class="pchips position-relative"><button class="chip chip-bg" aria-label="背景色"></button><button class="chip chip-fg" aria-label="前景色"></button></div>
              <div class="hsb">
                <div class="d-flex align-items-center"><label for="h">H</label><input type="range" class="slide r-h" min="0" max="360" value="204" aria-label="色相"><input id="h" class="box" value="206"><span>°</span></div>
                <div class="d-flex align-items-center"><label for="s">S</label><input type="range" class="slide r-s" value="74" aria-label="饱和度"><input id="s" class="box" value="75"><span>%</span></div>
                <div class="d-flex align-items-center"><label for="b">B</label><input type="range" class="slide r-b" value="66" aria-label="亮度"><input id="b" class="box" value="67"><span>%</span></div>
              </div>
            </div>
            <div class="wheelwrap position-relative">
              <div class="wheel position-relative">
                <div class="ring position-absolute"></div>
                <svg width="450" height="450">
                  <defs>
                    <linearGradient id="gw" gradientUnits="userSpaceOnUse" x1="133" y1="66" x2="271" y2="304"><stop offset="0" stop-color="#fff"/><stop offset="1" stop-color="#000"/></linearGradient>
                    <linearGradient id="gc" gradientUnits="userSpaceOnUse" x1="133" y1="0" x2="408" y2="0"><stop offset="0" stop-color="#000"/><stop offset="1" stop-color="#4090f7"/></linearGradient>
                    <clipPath id="tc"><path d="M133 66v318l275-159z"/></clipPath>
                  </defs>
                  <g class="tri" clip-path="url(#tc)">
                    <path d="M130 60h280v330H130z" fill="url(#gw)"/>
                    <path class="hue" d="M130 60h280v330H130z" fill="url(#gc)"/>
                  </g>
                  <g fill="none" stroke="#fff" stroke-width="2"><circle cx="272" cy="252" r="11"/><circle cx="41" cy="316" r="11"/></g>
                </svg>
              </div>
              <button class="addcolor position-absolute" aria-label="添加到色板"><svg width="22" height="22"><rect x="1" y="1" width="20" height="20"/><path d="M11 6v10M6 11h10"/></svg></button>
            </div>
          </section>

          <section class="layers d-flex flex-column flex-grow-1">
            <div class="ptabs d-flex fixed"><button class="on w82">图层</button><button class="w80">通道</button><button class="w82">路径</button><div class="rest flex-grow-1 d-flex align-items-center justify-content-end"><svg width="20" height="16"><path d="M0 2h20M0 6h20M0 10h20M0 14h20"/></svg></div></div>
            <div class="lrow lrow1 d-flex align-items-center dims fixed">
              <div class="position-relative"><select class="sel form-select kind" disabled aria-label="滤镜类型"><option>类型</option></select><svg class="kindicon position-absolute" width="22" height="22"><circle cx="9" cy="9" r="7.500"/><path d="M14 14l6 6" stroke-width="4"/></svg></div>
              <div class="filters d-flex align-items-center">
                <button aria-label="像素"><svg width="24" height="20"><rect x="1" y="1" width="22" height="18"/><path class="f" d="M4 16l5-9 3 5 3-4 5 8z"/></svg></button>
                <button aria-label="调整"><svg width="22" height="22"><circle cx="10" cy="11" r="9.500"/><path class="f" d="M17 4.500A10 10 0 1 1 3 18z"/></svg></button>
                <button aria-label="文字"><svg width="20" height="22"><path d="M2 7V2.500h16V7M10 2v17M5 19.500h10" stroke-width="3.500"/></svg></button>
                <button aria-label="形状"><svg width="22" height="22"><path d="M3 3h16v16H3z"/><path d="M1 1h4v4H1zM17 1h4v4h-4zM1 17h4v4H1zM17 17h4v4h-4z" fill="#f0f0f0" stroke-width="1.500"/></svg></button>
                <button aria-label="智能对象"><svg width="22" height="24"><path d="M6 12V1h8l6 6v14h-8"/><path class="f" d="M14 1v6h6zM10 11h7v7h-7z"/><rect x="1" y="13" width="10" height="10" fill="#f0f0f0"/></svg></button>
                <button aria-label="滤镜开关" class="ps-1"><div class="switch"></div></button>
              </div>
            </div>
            <div class="lrow lrow2 d-flex align-items-center dims fixed">
              <select class="sel form-select blend" disabled aria-label="混合模式"><option>正常</option></select><label for="op" class="faint">不透明度:</label>
              <div class="combo d-flex"><input id="op" value="100%" disabled><button aria-label="不透明度选项"><svg width="16" height="10"><path d="M2 1l6 6 6-6"/></svg></button></div>
            </div>
            <div class="lrow lrow3 d-flex align-items-center dims fixed">
              <span class="faint">锁定:</span>
              <div class="locks d-flex align-items-center">
                <button aria-label="锁定透明像素"><svg width="22" height="22"><path d="M8 2h6v6H8zM2 8h6v6H2zM14 8h6v6h-6zM8 14h6v6H8z" fill="#b5b5b5" stroke="none"/><rect x="1" y="1" width="20" height="20"/></svg></button>
                <button aria-label="锁定图像像素"><svg width="26" height="28"><path class="f" d="M26 0L11 16l4 4Q23 12 26 0zM10 16q-5 0-6 5-1 4-4 6 11 2 13-4 1-5-3-7z"/></svg></button>
                <button aria-label="锁定位置"><svg width="26" height="26"><path d="M13 4v18M4 13h18"/><path class="f" d="M13 0l5 6H8zM13 26l5-6H8zM0 13l6-5v10zM26 13l-6-5v10z"/></svg></button>
                <button aria-label="防止画板嵌套"><svg width="28" height="24"><path d="M5 4h12l6 6v10H5zM17 4v6h6M0 4h3M0 20h3M25 20h3M25 4h3M5 0v2M23 0v2M5 22v2M23 22v2"/></svg></button>
                <button aria-label="全部锁定"><svg width="20" height="24"><path class="f" d="M0 11q0-1 1-1h18q1 0 1 1v12H0z"/><path d="M5 11V7q0-5 5-6 5 1 5 6v4"/><circle cx="10" cy="16" r="2.500" fill="#f0f0f0" stroke="none"/></svg></button>
              </div>
              <label for="fl" class="faint">填充:</label>
              <div class="combo d-flex"><input id="fl" value="100%" disabled><button aria-label="填充选项"><svg width="16" height="10"><path d="M2 1l6 6 6-6"/></svg></button></div>
            </div>
            <div class="d-flex flex-grow-1">
              <div class="list flex-grow-1">
                <div class="lrowline d-flex">
                  <button class="eye d-flex align-items-center justify-content-center" aria-label="可见性"><svg width="26" height="18"><path d="M1 9q12-15 24 0-12 15-24 0z" fill="#2f2f2f" stroke="none"/><circle cx="13" cy="9" r="5.500" fill="#2f2f2f" stroke="#f0f0f0" stroke-width="1.500"/><circle cx="15" cy="7" r="1.500" fill="#f0f0f0" stroke="none"/></svg></button>
                  <div class="layeritem d-flex align-items-center flex-grow-1"><div class="lthumb"></div>背景<svg width="20" height="24" class="ms-auto"><rect x="1" y="9" width="18" height="14" rx="1"/><path d="M5 9V6q1-5 5-5t5 5v3"/><circle class="f" cx="10" cy="16" r="2.500"/></svg></div>
                </div>
              </div>
              <div class="rail fixed"></div>
            </div>
            <div class="lfoot d-flex justify-content-end fixed">
              <button aria-label="链接图层"><svg class="soft" width="28" height="14"><path d="M12 3Q10 1 7 1 1 1 1 7t6 6q3 0 5-2M16 3q2-2 5-2 6 0 6 6t-6 6q-3 0-5-2M8 7h12"/></svg></button>
              <button class="fx" aria-label="图层样式">fx</button>
              <button aria-label="添加蒙版"><svg width="25" height="20"><path class="f" d="M0 0h25v20H0z"/><circle cx="12.500" cy="10" r="6" fill="#f0f0f0" stroke="none"/></svg></button>
              <button aria-label="新建调整图层"><svg width="36" height="28"><circle cx="18" cy="13" r="10"/><path class="f" d="M25.500 6A11 11 0 1 1 11 20.500zM29 24h7l-3.500 4z"/></svg></button>
              <button aria-label="新建组"><svg width="24" height="20"><path d="M1 1h8l2 3h12v15H1z" fill="#c4c4c4"/></svg></button>
              <button aria-label="新建图层"><svg width="22" height="22"><rect x="1" y="1" width="20" height="20"/><path d="M11 6v10M6 11h10"/></svg></button>
              <button aria-label="删除图层"><svg class="soft" width="22" height="24"><path d="M0 5h22M7 5V1h8v4M2.500 5v18h17V5M7 9v10M11 9v10M15 9v10"/></svg></button>
            </div>
          </section>
        </div>
      </div>
    </aside>
  </div>
</main>

<div class="dusk position-absolute"></div>
<svg class="wm position-absolute" width="535" height="280">
  <text class="big" x="2" y="169">Bai</text>
  <ellipse cx="200" cy="74" rx="19" ry="25"/><ellipse cx="237" cy="37" rx="18" ry="26"/><ellipse cx="283" cy="40" rx="20" ry="25" transform="rotate(8 283 40)"/><ellipse cx="311" cy="85" rx="19" ry="24"/>
  <path d="M255 76q14 0 24 17 8 15 26 31 14 12 14 25-2 26-26 25-12 0-20-3-17-3-35 1-12 2-22 2-24-3-24-31 0-12 14-24 18-15 28-34 8-9 21-9z"/>
  <text class="du" x="212" y="158">du</text>
  <text class="cn" x="337" y="165">经验</text>
  <text class="url" x="6" y="238">jingyan.baidu.com</text>
</svg>

<script src="https://cdn.jsdelivr.net/npm/bootstrap@5.3.0/dist/js/bootstrap.bundle.min.js"></script>
</body>
</html>
